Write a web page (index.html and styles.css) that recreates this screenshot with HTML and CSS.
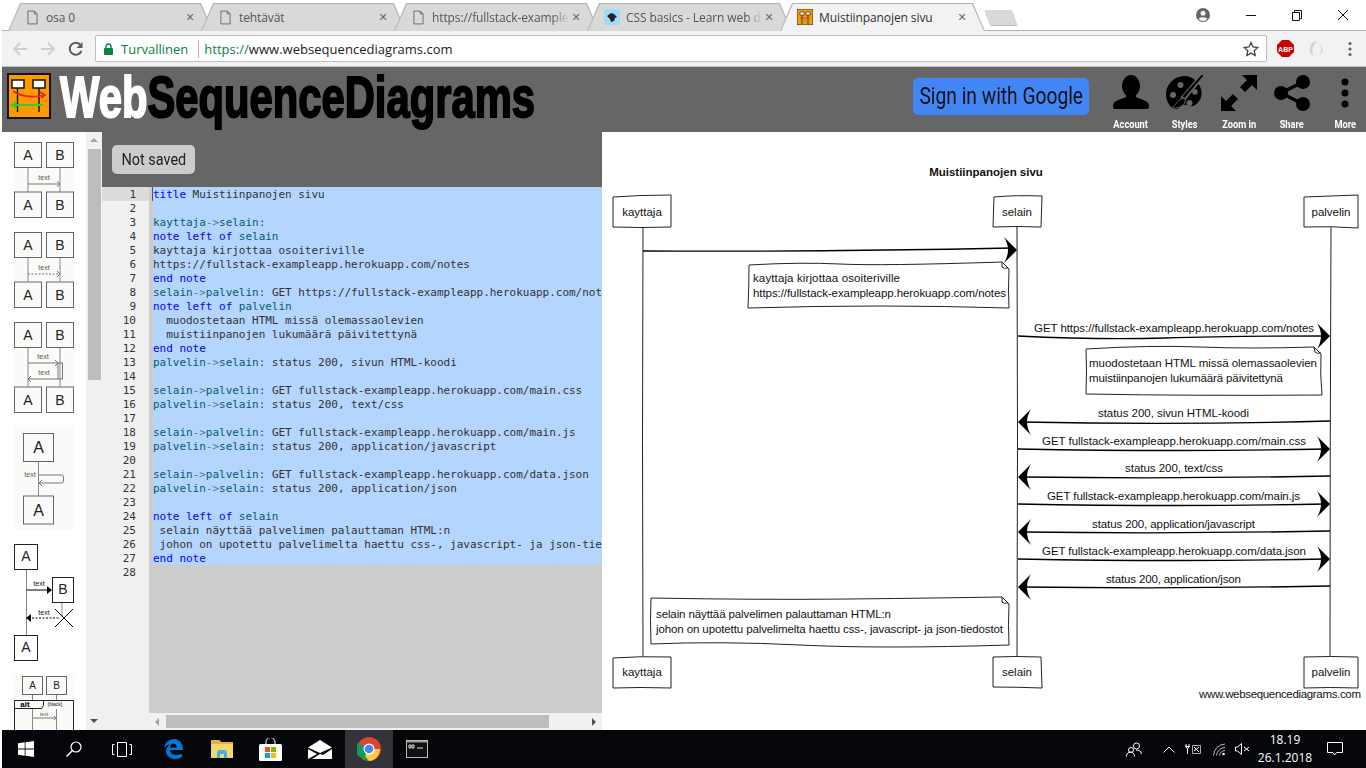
FILE: index.html
```html
<!DOCTYPE HTML>
<html>
<head>
    <title>Muistiinpanojen sivu</title>
    <meta charset="utf-8">
    <link rel="stylesheet" href="styles.css">
</head>
<body>
<div class="window">
    <!-- browser tabs -->
    <div class="tabstrip">
        <div class="tab">
            <svg class="favicon" viewBox="0 0 12 16"><path d="M1 1h7l3 3v11H1z M8 1v3h3" fill="none" stroke="#666"/></svg>
            <span class="tab-title">osa 0</span><span class="tab-close">✕</span>
        </div>
        <div class="tab">
            <svg class="favicon" viewBox="0 0 12 16"><path d="M1 1h7l3 3v11H1z M8 1v3h3" fill="none" stroke="#666"/></svg>
            <span class="tab-title">tehtävät</span><span class="tab-close">✕</span>
        </div>
        <div class="tab">
            <svg class="favicon" viewBox="0 0 12 16"><path d="M1 1h7l3 3v11H1z M8 1v3h3" fill="none" stroke="#666"/></svg>
            <span class="tab-title fade">https://fullstack-example</span><span class="tab-close">✕</span>
        </div>
        <div class="tab">
            <svg class="favicon wide" viewBox="0 0 16 16"><rect width="16" height="16" fill="#9fdcf6"/><path d="M3 7l4-3 3 1 3 3-2 1-1 3-3 1-1-3z" fill="#222"/></svg>
            <span class="tab-title fade">CSS basics - Learn web d</span><span class="tab-close">✕</span>
        </div>
        <div class="tab active">
            <svg class="favicon wide" viewBox="0 0 16 16"><rect width="16" height="16" fill="#f90" stroke="#333"/><rect x="3" y="3" width="4" height="3" fill="#fff" stroke="#333" stroke-width=".7"/><rect x="9" y="3" width="4" height="3" fill="#fff" stroke="#333" stroke-width=".7"/><path d="M5 6v9M11 6v9" stroke="#333"/><path d="M3 9h10" stroke="#d33"/><path d="M3 12h10" stroke="#4b3"/></svg>
            <span class="tab-title dark">Muistiinpanojen sivu</span><span class="tab-close">✕</span>
        </div>
        <div class="newtab"></div>
        <div class="window-controls">
            <svg width="14" height="14" viewBox="0 0 14 14"><circle cx="7" cy="7" r="7" fill="#666"/><circle cx="7" cy="5.2" r="2.5" fill="#f2f2f2"/><path d="M2.6 11c1-2.4 7.800-2.400 8.800 0-2 2.600-6.800 2.600-8.800 0z" fill="#f2f2f2"/></svg>
            <svg width="12" height="12" viewBox="0 0 12 12"><path d="M1 6.500h10" stroke="#111"/></svg>
            <svg width="12" height="12" viewBox="0 0 12 12"><path d="M1.500 3.500h7v8h-7z M3.500 3.500v-2h7v8h-2" fill="none" stroke="#111"/></svg>
            <svg width="12" height="12" viewBox="0 0 12 12"><path d="M1 1l10 10M11 1L1 11" stroke="#111"/></svg>
        </div>
    </div>

    <!-- browser toolbar -->
    <div class="toolbar">
        <svg class="nav-icon" viewBox="0 0 16 16"><path d="M15 8H2M8 2L2 8l6 6" fill="none" stroke="#cfcfcf" stroke-width="1.800"/></svg>
        <svg class="nav-icon" viewBox="0 0 16 16"><path d="M1 8h13M8 2l6 6-6 6" fill="none" stroke="#cfcfcf" stroke-width="1.800"/></svg>
        <svg class="nav-icon" viewBox="0 0 16 16"><path d="M13.400 9.800A6 6 0 1 1 12.300 3.800" fill="none" stroke="#5a5a5a" stroke-width="2"/><path d="M14.500 1v6h-6z" fill="#5a5a5a"/></svg>
        <div class="omnibox">
            <svg width="9" height="12" viewBox="0 0 9 12"><rect y="5" width="9" height="7" rx="1" fill="#0b8043"/><path d="M2 5V3.500a2.500 2.500 0 0 1 5 0V5" fill="none" stroke="#0b8043" stroke-width="1.400"/></svg>
            <span class="secure">Turvallinen</span>
            <span class="omni-sep"></span>
            <span class="url"><span class="url-scheme">https://</span>www.websequencediagrams.com</span>
            <svg class="star" width="16" height="16" viewBox="0 0 16 16"><path d="M8 1.500l2 4.500 4.800.5-3.600 3.200 1 4.800L8 12.100l-4.200 2.400 1-4.800L1.200 6.500 6 6z" fill="none" stroke="#444" stroke-width="1.300"/></svg>
        </div>
        <div class="extensions">
            <svg width="17" height="17" viewBox="0 0 17 17"><path d="M5 0h7l5 5v7l-5 5H5l-5-5V5z" fill="#c00"/><text x="8.500" y="11.500" class="abp">ABP</text></svg>
            <svg width="16" height="18" viewBox="0 0 16 18"><path d="M8 1a8 8 0 0 0-3 15C2 12 3 6 8 1z M9 3c4 2 5 9 0 13 5-1 7-10 0-13z" fill="#d3d3d3"/></svg>
            <svg width="4" height="16" viewBox="0 0 4 16"><circle cx="2" cy="2.500" r="1.600" fill="#666"/><circle cx="2" cy="8" r="1.600" fill="#666"/><circle cx="2" cy="13.500" r="1.600" fill="#666"/></svg>
        </div>
    </div>

    <!-- site header -->
    <div class="header">
        <svg class="logo" viewBox="0 0 44 46">
            <rect x="1" y="1" width="42" height="44" fill="#f90" stroke="#111" stroke-width="2"/>
            <rect x="5" y="7" width="12" height="8" fill="#fff" stroke="#111" stroke-width="1.500"/>
            <rect x="26" y="7" width="12" height="8" fill="#fff" stroke="#111" stroke-width="1.500"/>
            <path d="M10.500 15v24M32 15v24" stroke="#111" stroke-width="1.400"/>
            <path d="M6 18c8 6 22 7 31 4" fill="none" stroke="#e22" stroke-width="1.800"/>
            <path d="M33 19l5 3-4 3" fill="none" stroke="#e22" stroke-width="1.800"/>
            <path d="M36 32H7" stroke="#3c3" stroke-width="2"/>
            <path d="M10 28l-5 4 5 4" fill="none" stroke="#3c3" stroke-width="1.800"/>
        </svg>
        <div class="brand"><span class="brand-web">Web</span>SequenceDiagrams</div>
        <a class="signin" href="#"><span>Sign in with Google</span></a>
        <div class="tools">
            <div class="tool">
                <svg viewBox="0 0 36 34" width="36" height="34"><ellipse cx="18" cy="11" rx="9" ry="11"/><path d="M13 20h10v2c5 3 13 3 13 9v1q0 2-2 2H2q-2 0-2-2v-1c0-6 8-6 13-9z"/></svg>
                <span>Account</span>
            </div>
            <div class="tool">
                <svg viewBox="0 0 38 36" width="38" height="36">
                    <path d="M20 1C9 0 0 9 0 19c0 7 4 14 9 15 4 1 5-3 8-4 4-1 8 3 12 0 5-3 8-10 6-16C33 7 27 2 20 1z"/>
                    <g fill="#666"><circle cx="14.500" cy="10" r="3"/><circle cx="7" cy="20" r="3"/><circle cx="29" cy="17" r="2.800"/><circle cx="23.500" cy="28" r="3"/></g>
                    <path d="M38 1L19 24l-3-2L35 0z" fill="#666" stroke="#666" stroke-width="2"/>
                    <path d="M37.500 .5L18.500 23l-2-1.700L35.500 0z"/>
                    <path d="M15 24c3-2 5 0 4 3-1 4-7 7-15 6 5-1 6-6 11-9z" stroke="#666"/>
                </svg>
                <span>Styles</span>
            </div>
            <div class="tool">
                <svg viewBox="0 0 36 36" width="36" height="36"><path d="M21 0h15v15l-5-5-7 7-5-5 7-7zM0 36V21l5 5 7-7 5 5-7 7 5 5z"/></svg>
                <span>Zoom in</span>
            </div>
            <div class="tool">
                <svg viewBox="0 0 36 36" width="36" height="36"><circle cx="29" cy="7" r="7"/><circle cx="7" cy="18" r="7"/><circle cx="29" cy="29" r="7"/><path d="M29 7L7 18l22 11" fill="none" stroke="#000" stroke-width="3.500"/></svg>
                <span>Share</span>
            </div>
            <div class="tool">
                <svg viewBox="0 0 8 36" width="8" height="36"><circle cx="4" cy="7" r="3.500"/><circle cx="4" cy="18" r="3.500"/><circle cx="4" cy="29" r="3.500"/></svg>
                <span>More</span>
            </div>
        </div>
    </div>

    <div class="main">
        <!-- shape palette -->
        <div class="palette">
            <svg class="thumb" width="60" height="76" viewBox="0 0 60 76">
                <rect width="60" height="76" fill="#fafbf8"/>
                <rect x=".5" y=".5" width="27" height="25" class="box"/><rect x="32.500" y=".5" width="27" height="25" class="box"/>
                <rect x=".5" y="50" width="27" height="25.500" class="box"/><rect x="32.500" y="50" width="27" height="25.500" class="box"/>
                <text x="14" y="18" class="t-a">A</text><text x="46" y="18" class="t-a">B</text><text x="14" y="68" class="t-a">A</text><text x="46" y="68" class="t-a">B</text>
                <path d="M14 26v24M46 26v24" class="life"/><path d="M14 42h32M43 39l3 3-3 3" class="msg"/><text x="30" y="38" class="t-s">text</text>
            </svg>
            <svg class="thumb" width="60" height="76" viewBox="0 0 60 76">
                <rect width="60" height="76" fill="#fafbf8"/>
                <rect x=".5" y=".5" width="27" height="25" class="box"/><rect x="32.500" y=".5" width="27" height="25" class="box"/>
                <rect x=".5" y="50" width="27" height="25.500" class="box"/><rect x="32.500" y="50" width="27" height="25.500" class="box"/>
                <text x="14" y="18" class="t-a">A</text><text x="46" y="18" class="t-a">B</text><text x="14" y="68" class="t-a">A</text><text x="46" y="68" class="t-a">B</text>
                <path d="M14 26v24M46 26v24" class="life"/><path d="M14 42h32" class="msg dash"/><path d="M43 39l3 3-3 3" class="msg"/><text x="30" y="38" class="t-s">text</text>
            </svg>
            <svg class="thumb" width="60" height="91" viewBox="0 0 60 91">
                <rect width="60" height="91" fill="#fafbf8"/>
                <rect x=".5" y=".5" width="27" height="25" class="box"/><rect x="32.500" y=".5" width="27" height="25" class="box"/>
                <rect x=".5" y="65" width="27" height="25.500" class="box"/><rect x="32.500" y="65" width="27" height="25.500" class="box"/>
                <text x="14" y="18" class="t-a">A</text><text x="46" y="18" class="t-a">B</text><text x="14" y="83" class="t-a">A</text><text x="46" y="83" class="t-a">B</text>
                <path d="M14 26v39M46 26v39" class="life"/><rect x="44" y="41" width="4.500" height="16" fill="none" class="msg"/>
                <path d="M14 41h30M41 38l3 3-3 3M44 57H14M17 54l-3 3 3 3" class="msg"/>
                <text x="29" y="37" class="t-s">text</text><text x="30" y="53" class="t-s">text</text>
            </svg>
            <svg class="thumb" width="60" height="103" viewBox="0 0 60 103">
                <rect width="60" height="103" fill="#fafbf8"/>
                <rect x="9.500" y="6.500" width="30" height="28" class="box"/><rect x="9.500" y="69" width="30" height="28" class="box"/>
                <text x="24.500" y="26" class="t-a big">A</text><text x="24.500" y="89" class="t-a big">A</text>
                <path d="M24.500 35v34" class="life"/><path d="M24.500 48h23q2 0 2 2v4q0 2-2 2h-23M28 53l-3 3 3 3" class="msg"/><text x="16" y="50" class="t-s">text</text>
            </svg>
            <svg class="thumb" width="60" height="118" viewBox="0 0 60 118">
                <rect width="60" height="118" fill="#fff"/>
                <rect x=".5" y=".5" width="23" height="25" class="box dark"/><rect x="38.500" y="33.500" width="21" height="25" class="box dark"/><rect x=".5" y="91.500" width="23" height="25" class="box dark"/>
                <text x="12" y="17" class="t-a">A</text><text x="49" y="50" class="t-a">B</text><text x="12" y="108" class="t-a">A</text>
                <path d="M12.500 26v65M48 59v14" class="life"/>
                <path d="M12.500 46H35" stroke="#000" stroke-width="1"/><path d="M33 42l5 4-5 4z" fill="#000"/>
                <path d="M18 74h28" stroke="#000" stroke-dasharray="2 1.500"/><path d="M17 70l-5 4 5 4z" fill="#000"/><path d="M41 65l18 18M59 65L41 83" stroke="#000"/>
                <text x="25" y="42" class="t-s black">text</text><text x="30" y="71" class="t-s black">text</text>
            </svg>
            <svg class="thumb" width="60" height="60" viewBox="0 0 60 60">
                <rect width="60" height="60" fill="#fafbf8"/>
                <rect x="8.500" y=".5" width="20" height="18" class="box"/><rect x="32.500" y=".5" width="20" height="18" class="box"/>
                <text x="18.500" y="13" class="t-a sm">A</text><text x="42.500" y="13" class="t-a sm">B</text>
                <path d="M18.500 19v5M42.500 19v5M18.500 33v27M42.500 33v27" class="life"/>
                <path d="M.5 60V24.500h59V60" fill="none" stroke="#222"/><path d="M.5 32.500h27l2-3v-5" fill="none" stroke="#222"/>
                <text x="11" y="31" class="t-alt">alt</text><text x="41" y="29.500" class="t-s black tiny">[black]</text>
                <path d="M19 42h23M40 40l2 2-2 2" class="msg"/><text x="30" y="40" class="t-s tiny">text</text>
                <path d="M1 55h58" stroke="#222" stroke-dasharray="2 1.500"/>
            </svg>
        </div>
        <div class="palette-scroll">
            <div class="arrow-up"></div>
            <div class="scroll-thumb"></div>
            <div class="arrow-down"></div>
        </div>

        <!-- source editor -->
        <div class="editor">
            <div class="editor-head"><div class="saved"><span>Not saved</span></div></div>
            <div class="code">
                <div class="gutter">
                    <div class="num current">1</div><div class="num">2</div><div class="num">3</div><div class="num">4</div>
                    <div class="num">5</div><div class="num">6</div><div class="num">7</div><div class="num">8</div>
                    <div class="num">9</div><div class="num">10</div><div class="num">11</div><div class="num">12</div>
                    <div class="num">13</div><div class="num">14</div><div class="num">15</div><div class="num">16</div>
                    <div class="num">17</div><div class="num">18</div><div class="num">19</div><div class="num">20</div>
                    <div class="num">21</div><div class="num">22</div><div class="num">23</div><div class="num">24</div>
                    <div class="num">25</div><div class="num">26</div><div class="num">27</div><div class="num">28</div>
                </div>
                <div class="source">
<div class="line first"><b>title</b> Muistiinpanojen sivu</div>
<div class="line"></div>
<div class="line"><i>kayttaja</i><u>-&gt;</u><i>selain:</i></div>
<div class="line"><b>note left of</b> <i>selain</i></div>
<div class="line">kayttaja kirjottaa osoiteriville</div>
<div class="line">https://fullstack-exampleapp.herokuapp.com/notes</div>
<div class="line"><b>end note</b></div>
<div class="line"><i>selain</i><u>-&gt;</u><i>palvelin:</i> GET https://fullstack-exampleapp.herokuapp.com/not</div>
<div class="line"><b>note left of</b> <i>palvelin</i></div>
<div class="line">  muodostetaan HTML missä olemassaolevien</div>
<div class="line">  muistiinpanojen lukumäärä päivitettynä</div>
<div class="line"><b>end note</b></div>
<div class="line"><i>palvelin</i><u>-&gt;</u><i>selain:</i> status 200, sivun HTML-koodi</div>
<div class="line"></div>
<div class="line"><i>selain</i><u>-&gt;</u><i>palvelin:</i> GET fullstack-exampleapp.herokuapp.com/main.css</div>
<div class="line"><i>palvelin</i><u>-&gt;</u><i>selain:</i> status 200, text/css</div>
<div class="line"></div>
<div class="line"><i>selain</i><u>-&gt;</u><i>palvelin:</i> GET fullstack-exampleapp.herokuapp.com/main.js</div>
<div class="line"><i>palvelin</i><u>-&gt;</u><i>selain:</i> status 200, application/javascript</div>
<div class="line"></div>
<div class="line"><i>selain</i><u>-&gt;</u><i>palvelin:</i> GET fullstack-exampleapp.herokuapp.com/data.json</div>
<div class="line"><i>palvelin</i><u>-&gt;</u><i>selain:</i> status 200, application/json</div>
<div class="line"></div>
<div class="line"><b>note left of</b> <i>selain</i></div>
<div class="line"> selain näyttää palvelimen palauttaman HTML:n</div>
<div class="line"> johon on upotettu palvelimelta haettu css-, javascript- ja json-tie</div>
<div class="line"><b>end note</b></div>
                </div>
                <div class="hscroll">
                    <div class="arrow-left"></div>
                    <div class="hscroll-thumb"></div>
                    <div class="arrow-right"></div>
                </div>
            </div>
        </div>

        <!-- rendered diagram, drawn in page coordinates -->
        <svg class="diagram" viewBox="602 132 764 598">
            <defs>
                <path id="head-r" d="M0 0L-13-13Q-5 0-13 13Z"/>
                <path id="head-l" d="M0 0L13-13Q5 0 13 13Z"/>
            </defs>

            <text x="986" y="176" class="d-title">Muistiinpanojen sivu</text>

            <path class="wob" d="M643 227Q642 440 643 656M1017 227Q1018 440 1017 656M1331 227Q1330 440 1330 656"/>

            <path class="wob fill" d="M613 197Q640 195 671 195L671 227Q640 228 613 227Z"/>
            <text x="642" y="216" class="d-c">kayttaja</text>
            <path class="wob fill" d="M994 197Q1015 195 1042 196L1041 227Q1015 226 993 227Z"/>
            <text x="1017" y="216" class="d-c">selain</text>
            <path class="wob fill" d="M1304 197Q1330 196 1358 195L1358 228Q1330 226 1304 227Z"/>
            <text x="1331" y="216" class="d-c">palvelin</text>

            <path class="wob fill" d="M613 658Q640 656 671 657L671 688Q640 687 613 688Z"/>
            <text x="642" y="676" class="d-c">kayttaja</text>
            <path class="wob fill" d="M993 657Q1015 656 1041 657L1042 688Q1015 687 993 687Z"/>
            <text x="1017" y="676" class="d-c">selain</text>
            <path class="wob fill" d="M1304 657Q1330 656 1358 657L1358 688Q1330 687 1304 688Z"/>
            <text x="1331" y="676" class="d-c">palvelin</text>

            <!-- messages -->
            <path class="msg-line" d="M643 251Q820 252 1012 248"/>
            <use href="#head-r" x="1017" y="250"/>

            <path class="wob fill" d="M749 265Q800 262 840 264T1002 262L1009 269Q1008 290 1009 308Q880 304 748 308Q749 285 749 265Z"/>
            <path class="wob" d="M1002 262L1002 267Q1004 269 1008 268"/>
            <text x="753" y="282" class="d-t" textLength="147">kayttaja kirjottaa osoiteriville</text>
            <text x="753" y="297" class="d-t" textLength="253">https://fullstack-exampleapp.herokuapp.com/notes</text>

            <text x="1034" y="332" class="d-t" textLength="280">GET https://fullstack-exampleapp.herokuapp.com/notes</text>
            <path class="msg-line" d="M1018 336Q1100 340 1165 338T1326 336"/>
            <use href="#head-r" x="1330" y="336"/>

            <path class="wob fill" d="M1086 349Q1150 345 1200 347T1314 347L1321 354Q1320 375 1322 395Q1200 396 1086 394Q1087 370 1086 349Z"/>
            <path class="wob" d="M1314 347L1315 352Q1317 354 1321 353"/>
            <text x="1089" y="367" class="d-t" textLength="228">muodostetaan HTML missä olemassaolevien</text>
            <text x="1089" y="382" class="d-t" textLength="194">muistiinpanojen lukumäärä päivitettynä</text>

            <text x="1098" y="417" class="d-t" textLength="151">status 200, sivun HTML-koodi</text>
            <path class="msg-line" d="M1330 421Q1180 425 1022 422"/>
            <use href="#head-l" x="1018" y="422"/>

            <text x="1042" y="445" class="d-t" textLength="264">GET fullstack-exampleapp.herokuapp.com/main.css</text>
            <path class="msg-line" d="M1018 449Q1180 452 1326 449"/>
            <use href="#head-r" x="1330" y="449"/>

            <text x="1125" y="472" class="d-t" textLength="98">status 200, text/css</text>
            <path class="msg-line" d="M1330 476Q1180 479 1022 477"/>
            <use href="#head-l" x="1018" y="477"/>

            <text x="1047" y="500" class="d-t" textLength="253">GET fullstack-exampleapp.herokuapp.com/main.js</text>
            <path class="msg-line" d="M1018 504Q1180 507 1326 504"/>
            <use href="#head-r" x="1330" y="504"/>

            <text x="1092" y="528" class="d-t" textLength="163">status 200, application/javascript</text>
            <path class="msg-line" d="M1330 531Q1180 534 1022 532"/>
            <use href="#head-l" x="1018" y="532"/>

            <text x="1042" y="555" class="d-t" textLength="264">GET fullstack-exampleapp.herokuapp.com/data.json</text>
            <path class="msg-line" d="M1018 559Q1180 562 1326 559"/>
            <use href="#head-r" x="1330" y="559"/>

            <text x="1106" y="583" class="d-t" textLength="135">status 200, application/json</text>
            <path class="msg-line" d="M1330 586Q1180 589 1022 587"/>
            <use href="#head-l" x="1018" y="587"/>

            <path class="wob fill" d="M651 598Q760 600 850 599T1002 597L1009 604Q1008 625 1009 645Q880 649 800 645T651 644Q650 620 651 598Z"/>
            <path class="wob" d="M1002 597L1002 602Q1004 604 1008 603"/>
            <text x="656" y="618" class="d-t" textLength="235">selain näyttää palvelimen palauttaman HTML:n</text>
            <text x="656" y="633" class="d-t" textLength="347">johon on upotettu palvelimelta haettu css-, javascript- ja json-tiedostot</text>

            <text x="1199" y="698" class="d-t" textLength="162">www.websequencediagrams.com</text>
        </svg>
    </div>

    <!-- windows taskbar -->
    <div class="taskbar">
        <svg class="task win" width="16" height="16" viewBox="0 0 16 16"><path d="M0 2.300l6.700-1v6.300H0zM7.500 1.200L16 0v7.600H7.500zM0 8.400h6.700v6.300L0 13.700zM7.500 8.400H16V16l-8.500-1.200z" fill="#fff"/></svg>
        <svg class="task search" width="16" height="16" viewBox="0 0 16 16"><circle cx="10" cy="6" r="5" fill="none" stroke="#fff" stroke-width="1.200"/><path d="M6.500 9.500L.5 15.500" stroke="#fff" stroke-width="1.400"/></svg>
        <svg class="task view" width="20" height="15" viewBox="0 0 20 15"><path d="M5.500.5h9v14h-9z M2.500 2.500H.5v10h2M17.500 2.500h2v10h-2" fill="none" stroke="#fff"/></svg>
        <svg class="task edge" width="20" height="20" viewBox="0 0 20 20"><path d="M1 9C2 3 7 0 11 0c6 0 9 5 9 11H7c0 4 4 5 7 5 2 0 4-1 5-1v3c-2 1-4 2-7 2-6 0-9-4-9-8 0-3 2-5 4-7-3 1-5 3-6 4zM7 8.500h7c0-2.500-2-4-4-4-1.500 0-2.500 1.500-3 4z" fill="#0078d7" fill-rule="evenodd"/></svg>
        <svg class="task folder" width="22" height="20" viewBox="0 0 22 20"><path d="M0 1h8l2 2h12v16H0z" fill="#f5d76e"/><path d="M0 1h8l2 2h12v2H0z" fill="#e0b040"/><path d="M6 19v-5q0-3 3-3h4q3 0 3 3v5h-3v-4H9v4z" fill="#3fb0e8"/></svg>
        <svg class="task store" width="23" height="23" viewBox="0 0 23 23"><path d="M7 6V4a4.500 4.500 0 0 1 9 0v2" fill="none" stroke="#fff"/><rect y="6" width="23" height="17" rx="1.500" fill="#fff"/><rect x="6" y="9" width="5" height="5" fill="#f25022"/><rect x="12" y="9" width="5" height="5" fill="#7fba00"/><rect x="6" y="15" width="5" height="5" fill="#00a4ef"/><rect x="12" y="15" width="5" height="5" fill="#ffb900"/></svg>
        <svg class="task mail" width="24" height="19" viewBox="0 0 24 19"><path d="M12 0l12 7.500L12 13 0 7.500zM0 9l9 5-9 5zM24 9v10H4l8-5 3 1z" fill="#fff"/></svg>
        <div class="task-active">
            <svg width="24" height="24" viewBox="0 0 24 24"><circle cx="12" cy="12" r="12" fill="#db4437"/><path d="M12 12L2 20a12 12 0 0 1-1-14z" fill="#0f9d58"/><path d="M12 24A12 12 0 0 1 3 19l6-7 8 3z" fill="#0f9d58"/><path d="M12 12l11 0A12 12 0 0 1 12 24l-4-5z" fill="#ffcd40"/><circle cx="12" cy="12" r="5.500" fill="#fff"/><circle cx="12" cy="12" r="4.300" fill="#4285f4"/></svg>
        </div>
        <svg class="task cmd" width="22" height="18" viewBox="0 0 22 18"><rect x=".5" y=".5" width="21" height="17" fill="#111" stroke="#bbb"/><rect x="1" y="1" width="20" height="1.500" fill="#999"/><path d="M3 5h2v3H3zM6 5h2v3H6zM11 8h6" fill="none" stroke="#ddd"/></svg>

        <div class="tray">
            <svg width="16" height="15" viewBox="0 0 16 15"><circle cx="10.500" cy="4" r="3" fill="none" stroke="#fff"/><circle cx="5" cy="8" r="2.500" fill="none" stroke="#fff"/><path d="M.5 14.500c0-6 8-6 8 0M10 8c3 0 5 1 5.500 4" fill="none" stroke="#fff"/></svg>
            <svg class="chevron" width="12" height="7" viewBox="0 0 12 7"><path d="M.5 6.500L6 1l5.500 5.500" fill="none" stroke="#fff"/></svg>
            <svg width="17" height="12" viewBox="0 0 17 12"><path d="M1 1v2.500L2.500 6v5M4 1v2.500L2.500 6M0 3.500h5" fill="none" stroke="#fff"/><path d="M7.500 2.500h8v8h-8z" fill="none" stroke="#aaa"/><path d="M9 4l5 5M14 4l-5 4" stroke="#fff"/></svg>
            <svg width="13" height="13" viewBox="0 0 13 13"><path d="M.5 12.500A12 12 0 0 1 12 1M3.500 12.500A9 9 0 0 1 12 4.500M6.500 12.500A6 6 0 0 1 12 7.500" fill="none" stroke="#bbb"/><circle cx="10.500" cy="11" r="1.300" fill="#fff"/></svg>
            <svg width="15" height="12" viewBox="0 0 15 12"><path d="M.5 4h2L6.500.5v11L2.500 8h-2z M9 4l5 4M14 4l-5 4" fill="none" stroke="#fff"/></svg>
            <div class="clock"><span>18.19</span><span>26.1.2018</span></div>
            <svg class="notify" width="16" height="14" viewBox="0 0 16 14"><path d="M.5.5h15v10H9.500L7.500 13 6 10.500H.5z" fill="none" stroke="#fff"/></svg>
        </div>
    </div>
</div>
</body>
</html>
```

FILE: styles.css
```css
html, body
{
    margin: 0;
    padding: 0;
    background: #fff;
}

svg { display: block; flex: none; }

.window
{
    width: 1366px;
    height: 768px;
    padding-left: 2px;
    box-sizing: border-box;
    display: flex;
    flex-direction: column;
    overflow: hidden;
    font-family: "Open Sans", sans-serif;
}

/* tabs */
.tabstrip
{
    height: 31px;
    flex: none;
    box-sizing: border-box;
    border-bottom: 1px solid #b4b4b4;
    display: flex;
    padding: 3px 0 0 6px;
    background: #fff;
}

.tab
{
    position: relative;
    flex: none;
    width: 205px;
    height: 28px;
    margin-right: -12px;
    padding: 0 16px 0 19px;
    box-sizing: border-box;
    display: flex;
    align-items: center;
    font-size: 12px;
    color: #555;
    background: #b4b4b4;
    clip-path: polygon(0 100%, 12px 0, calc(100% - 12px) 0, 100% 100%);
}

.tab::before
{
    content: "";
    position: absolute;
    left: 1px;
    right: 1px;
    top: 1px;
    bottom: 0;
    background: #d9d9d9;
    clip-path: polygon(0 100%, 12px 0, calc(100% - 12px) 0, 100% 100%);
}

.tab.active::before { background: #f2f2f2; }
.tab > * { position: relative; }

.favicon { width: 11px; height: 15px; margin-right: 8px; }
.favicon.wide { width: 16px; height: 16px; margin-left: -2px; margin-right: 6px; }

.tab-title
{
    flex: 1;
    white-space: nowrap;
    overflow: hidden;
    letter-spacing: -.1px;
}

.tab-title.dark { color: #333; }

.tab-title.fade
{
    -webkit-mask-image: linear-gradient(to right, #000 88%, transparent);
    mask-image: linear-gradient(to right, #000 88%, transparent);
}

.tab-close
{
    width: 14px;
    font-size: 11px;
    font-family: "DejaVu Sans", sans-serif;
    color: #6a6a6a;
    font-weight: bold;
    text-align: center;
}

.newtab
{
    width: 28px;
    height: 15px;
    margin: 7px 0 0 14px;
    background: #d9d9d9;
    border-bottom: 1px solid #bbb;
    transform: skewX(20deg);
    border-radius: 2px;
}

.window-controls
{
    margin-left: auto;
    margin-top: 5px;
    height: 14px;
    display: flex;
    align-items: center;
}

.window-controls svg:nth-child(1) { margin-right: 35px; }
.window-controls svg:nth-child(2) { margin-right: 34px; }
.window-controls svg:nth-child(3) { margin-right: 34px; }
.window-controls svg:nth-child(4) { margin-right: 17px; }

/* toolbar */
.toolbar
{
    height: 36px;
    flex: none;
    box-sizing: border-box;
    background: #f2f2f2;
    border-bottom: 1px solid #c4c4c4;
    display: flex;
    align-items: center;
    padding-left: 10px;
}

.nav-icon { width: 16px; height: 16px; margin-right: 12px; }

.omnibox
{
    width: 1172px;
    height: 27px;
    margin-left: -1px;
    box-sizing: border-box;
    background: #fff;
    border: 1px solid #bdbdbd;
    border-radius: 2px;
    display: flex;
    align-items: center;
    padding-left: 8px;
    font-size: 13px;
    color: #222;
}

.secure { color: #0b8043; margin-left: 8px; }
.omni-sep { width: 1px; height: 18px; background: #bbb; margin: 0 5px 0 10px; }
.url { letter-spacing: .03px; }
.url-scheme { color: #0b8043; }
.star { margin-left: auto; margin-right: 7px; }

.extensions
{
    display: flex;
    align-items: center;
    margin-left: 10px;
}

.extensions svg:nth-child(1) { margin-right: 15px; }
.extensions svg:nth-child(2) { margin-right: 23px; }

/* site header */
.header
{
    height: 65px;
    flex: none;
    background: #666;
    display: flex;
    align-items: flex-start;
}

.logo { width: 44px; height: 46px; margin: 6px 0 0 5px; }

/* no condensed face is installed, so the bold is squeezed; the negative margin gives back the width */
.brand
{
    flex: none;
    margin: 0 -184px 0 9px;
    font-family: "Liberation Sans", sans-serif;
    font-weight: bold;
    font-size: 58px;
    line-height: 60px;
    color: #000;
    -webkit-text-stroke: 2px currentColor;
    white-space: nowrap;
    transform: scaleX(.72);
    transform-origin: left top;
}

.brand-web { color: #fff; }

.signin
{
    margin: 11px 0 0 auto;
    width: 176px;
    height: 37px;
    background: #4285f4;
    border-radius: 5px;
    display: flex;
    justify-content: center;
    font-family: Roboto, sans-serif;
    font-size: 24px;
    line-height: 37px;
    color: #111;
    text-decoration: none;
    white-space: nowrap;
}

.signin span
{
    flex: none;
    transform: scaleX(.8);
}

.tools
{
    display: flex;
    margin: 8px -6px 0 15px;
}

.tool
{
    width: 54px;
    height: 56px;
    display: flex;
    flex-direction: column;
    align-items: center;
    justify-content: space-between;
}

.tool:nth-child(4) { width: 52px; }

.tool span
{
    font-family: Roboto, sans-serif;
    font-weight: bold;
    font-size: 10.5px;
    line-height: 12px;
    color: #fff;
    transform: scaleX(.88);
}

/* main area */
.main
{
    flex: 1;
    display: flex;
    min-height: 0;
}

.palette
{
    width: 84px;
    flex: none;
    box-sizing: border-box;
    padding: 10px 0 0 12px;
    display: flex;
    flex-direction: column;
    gap: 14px;
    overflow: hidden;
}

.box { fill: #fafbf8; stroke: #666; }
.box.dark { fill: #fff; stroke: #222; }
.life { stroke: #888; fill: none; }
.msg { stroke: #777; fill: none; }
.msg.dash { stroke-dasharray: 2 1.500; }

.t-a
{
    font-family: "Liberation Sans", sans-serif;
    font-size: 14px;
    text-anchor: middle;
    fill: #222;
}

.t-a.big { font-size: 16px; }
.t-a.sm { font-size: 10px; }

.t-s
{
    font-family: "Liberation Sans", sans-serif;
    font-size: 7px;
    text-anchor: middle;
    fill: #555;
}

.t-s.black { fill: #111; }
.t-s.tiny { font-size: 5px; }

.t-alt
{
    font-family: "Liberation Sans", sans-serif;
    font-size: 8px;
    font-weight: bold;
    text-anchor: middle;
}

.palette-scroll
{
    width: 16px;
    flex: none;
    background: #f1f1f1;
    display: flex;
    flex-direction: column;
    align-items: center;
}

.arrow-up
{
    margin-top: 6px;
    border: 4px solid transparent;
    border-top: 0;
    border-bottom: 4px solid #a3a3a3;
}

.scroll-thumb
{
    width: 13px;
    height: 231px;
    margin-top: 7px;
    background: #bdbdbd;
}

.arrow-down
{
    margin-top: auto;
    margin-bottom: 7px;
    border: 4px solid transparent;
    border-bottom: 0;
    border-top: 4px solid #505050;
}

/* editor */
.editor
{
    width: 500px;
    flex: none;
    display: flex;
    flex-direction: column;
    min-height: 0;
}

.editor-head
{
    height: 55px;
    flex: none;
    background: #666;
    padding: 13px 0 0 10px;
    box-sizing: border-box;
}

.saved
{
    width: 83px;
    height: 29px;
    background: #ccc;
    border-radius: 5px;
    display: flex;
    justify-content: center;
    font-family: Roboto, sans-serif;
    font-size: 16px;
    line-height: 29px;
    color: #222;
}

.saved span { flex: none; transform: scaleX(.9); }

.code
{
    flex: 1;
    min-height: 0;
    display: grid;
    grid-template-columns: 47px 453px;
    grid-template-rows: 1fr 17px;
    background: #ccc;
}

.gutter
{
    grid-row: 1 / 3;
    background: #f0f0f0;
}

.num
{
    height: 14px;
    padding-right: 13px;
    font: 11px/16px "DejaVu Sans Mono", monospace;
    text-align: right;
    color: #333;
}

.num.current { background: #dcdcdc; }

.source
{
    padding-left: 4px;
    overflow: hidden;
    font: 11px/16px "DejaVu Sans Mono", monospace;
    letter-spacing: -.02px;
    color: #333;
}

.line
{
    height: 14px;
    background: #b4d5fe;
    white-space: pre;
}

.line.first { box-shadow: -1px 0 0 #555; }
.line b { font-weight: normal; color: #00f; }
.line i { font-style: normal; color: #045d6e; }
.line u { text-decoration: none; color: #4f7a86; }

.hscroll
{
    background: #f1f1f1;
    display: flex;
    align-items: center;
    padding: 0 6px;
}

.arrow-left
{
    border: 4px solid transparent;
    border-left: 0;
    border-right: 4px solid #a3a3a3;
}

.hscroll-thumb
{
    width: 383px;
    height: 13px;
    margin-left: 7px;
    background: #bdbdbd;
}

.arrow-right
{
    margin-left: auto;
    border: 4px solid transparent;
    border-right: 0;
    border-left: 4px solid #505050;
}

/* diagram */
.diagram
{
    width: 764px;
    height: 598px;
    flex: none;
    background: #fff;
}

.wob { fill: none; stroke: #222; stroke-width: 1; }
.wob.fill { fill: #fff; }
.msg-line { fill: none; stroke: #000; stroke-width: 1.300; }

.d-title
{
    font-family: "Liberation Sans", sans-serif;
    font-weight: bold;
    font-size: 11.500px;
    text-anchor: middle;
    fill: #111;
}

.d-c
{
    font-family: "Liberation Sans", sans-serif;
    font-size: 11.500px;
    text-anchor: middle;
    fill: #111;
}

.d-t
{
    font-family: "Liberation Sans", sans-serif;
    font-size: 11.500px;
    fill: #111;
}

/* taskbar */
.taskbar
{
    height: 38px;
    flex: none;
    background: #05060a;
    display: flex;
    align-items: center;
}

.task.win { margin-left: 16px; }
.task.search { margin-left: 32px; }
.task.view { margin-left: 30px; }
.task.edge { margin-left: 31px; }
.task.folder { margin-left: 28px; }
.task.store { margin-left: 26px; }
.task.mail { margin-left: 26px; }

.task-active
{
    width: 48px;
    height: 38px;
    margin-left: 13px;
    background: #33343a;
    display: flex;
    align-items: center;
    justify-content: center;
}

.task.cmd { margin-left: 13px; }

.tray
{
    margin-left: auto;
    display: flex;
    align-items: center;
    color: #fff;
}

.chevron { margin-left: 21px; }
.tray svg:nth-child(3) { margin-left: 10px; }
.tray svg:nth-child(4) { margin-left: 11px; }
.tray svg:nth-child(5) { margin-left: 9px; }

.clock
{
    width: 70px;
    display: flex;
    flex-direction: column;
    align-items: center;
    font-size: 12px;
    line-height: 18px;
}

.notify { margin: 0 23px 0 7px; }

.abp
{
    font-family: "Liberation Sans", sans-serif;
    font-weight: bold;
    font-size: 7px;
    fill: #fff;
    text-anchor: middle;
}
```
